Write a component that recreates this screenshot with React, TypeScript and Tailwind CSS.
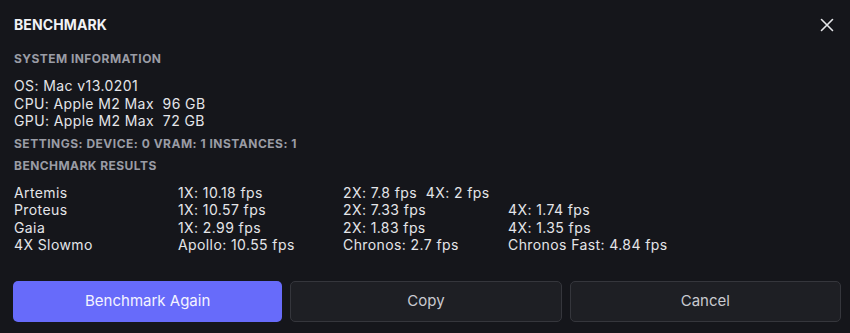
import React from "react";

const rows: string[][] = [
  ["Artemis", "1X: 10.18 fps", "2X: 7.8 fps\u00a0 4X: 2 fps", ""],
  ["Proteus", "1X: 10.57 fps", "2X: 7.33 fps", "4X: 1.74 fps"],
  ["Gaia", "1X: 2.99 fps", "2X: 1.83 fps", "4X: 1.35 fps"],
  ["4X Slowmo", "Apollo: 10.55 fps", "Chronos: 2.7 fps", "Chronos Fast: 4.84 fps"],
];

export default function App() {
  return (
    <div
      className="w-[850px] h-[333px] bg-[#15161b] px-[14px] flex flex-col text-[#e4e5e9] overflow-hidden"
      style={{ fontFamily: "Inter, 'Noto Sans', sans-serif" }}
    >
      <div className="flex items-center justify-between mt-[15px] h-[20px]">
        <div className="text-[14px] font-bold leading-[20px] tracking-[0.1px] text-[#f1f2f5]">BENCHMARK</div>
        <svg width="14" height="14" viewBox="0 0 14 14" className="mr-[2px]">
          <path d="M1.5 1.5 L12.5 12.5 M12.5 1.5 L1.5 12.5" stroke="#e6e7ea" strokeWidth="1.6" strokeLinecap="round" />
        </svg>
      </div>
      <div className="mt-[16px] text-[12px] font-bold leading-[16px] tracking-[0.45px] text-[#9a9ca5]">SYSTEM INFORMATION</div>
      <div className="mt-[10px] text-[14px] leading-[17.5px] tracking-[0.4px]">
        <div>OS: Mac v13.0201</div>
        <div>CPU: Apple M2 Max&nbsp; 96 GB</div>
        <div>GPU: Apple M2 Max&nbsp; 72 GB</div>
      </div>
      <div className="mt-[6px] text-[12px] font-bold leading-[16px] tracking-[0.5px] text-[#9a9ca5]">
        SETTINGS: DEVICE: 0 VRAM: 1 INSTANCES: 1
      </div>
      <div className="mt-[6px] text-[12px] font-bold leading-[16px] tracking-[0.45px] text-[#9a9ca5]">BENCHMARK RESULTS</div>
      <div className="mt-[10px] grid grid-cols-[164px_165px_165px_1fr] text-[14px] leading-[17.5px] tracking-[0.4px]">
        {rows.map((r, i) => (
          <React.Fragment key={i}>
            {r.map((c, j) => (
              <div key={j} className="whitespace-nowrap">{c}</div>
            ))}
          </React.Fragment>
        ))}
      </div>
      <div className="mt-[27px] flex gap-[8px] -ml-[1px] -mr-[5px]">
        <button className="flex-1 h-[41px] rounded-[5px] bg-[#676bfa] text-[15px] text-[#f4f4ff]">Benchmark Again</button>
        <button className="flex-1 h-[41px] rounded-[5px] bg-[#1e1f24] border border-[#35363c] text-[15px] text-[#c9cad0]">Copy</button>
        <button className="flex-1 h-[41px] rounded-[5px] bg-[#1e1f24] border border-[#35363c] text-[15px] text-[#c9cad0]">Cancel</button>
      </div>
    </div>
  );
}
